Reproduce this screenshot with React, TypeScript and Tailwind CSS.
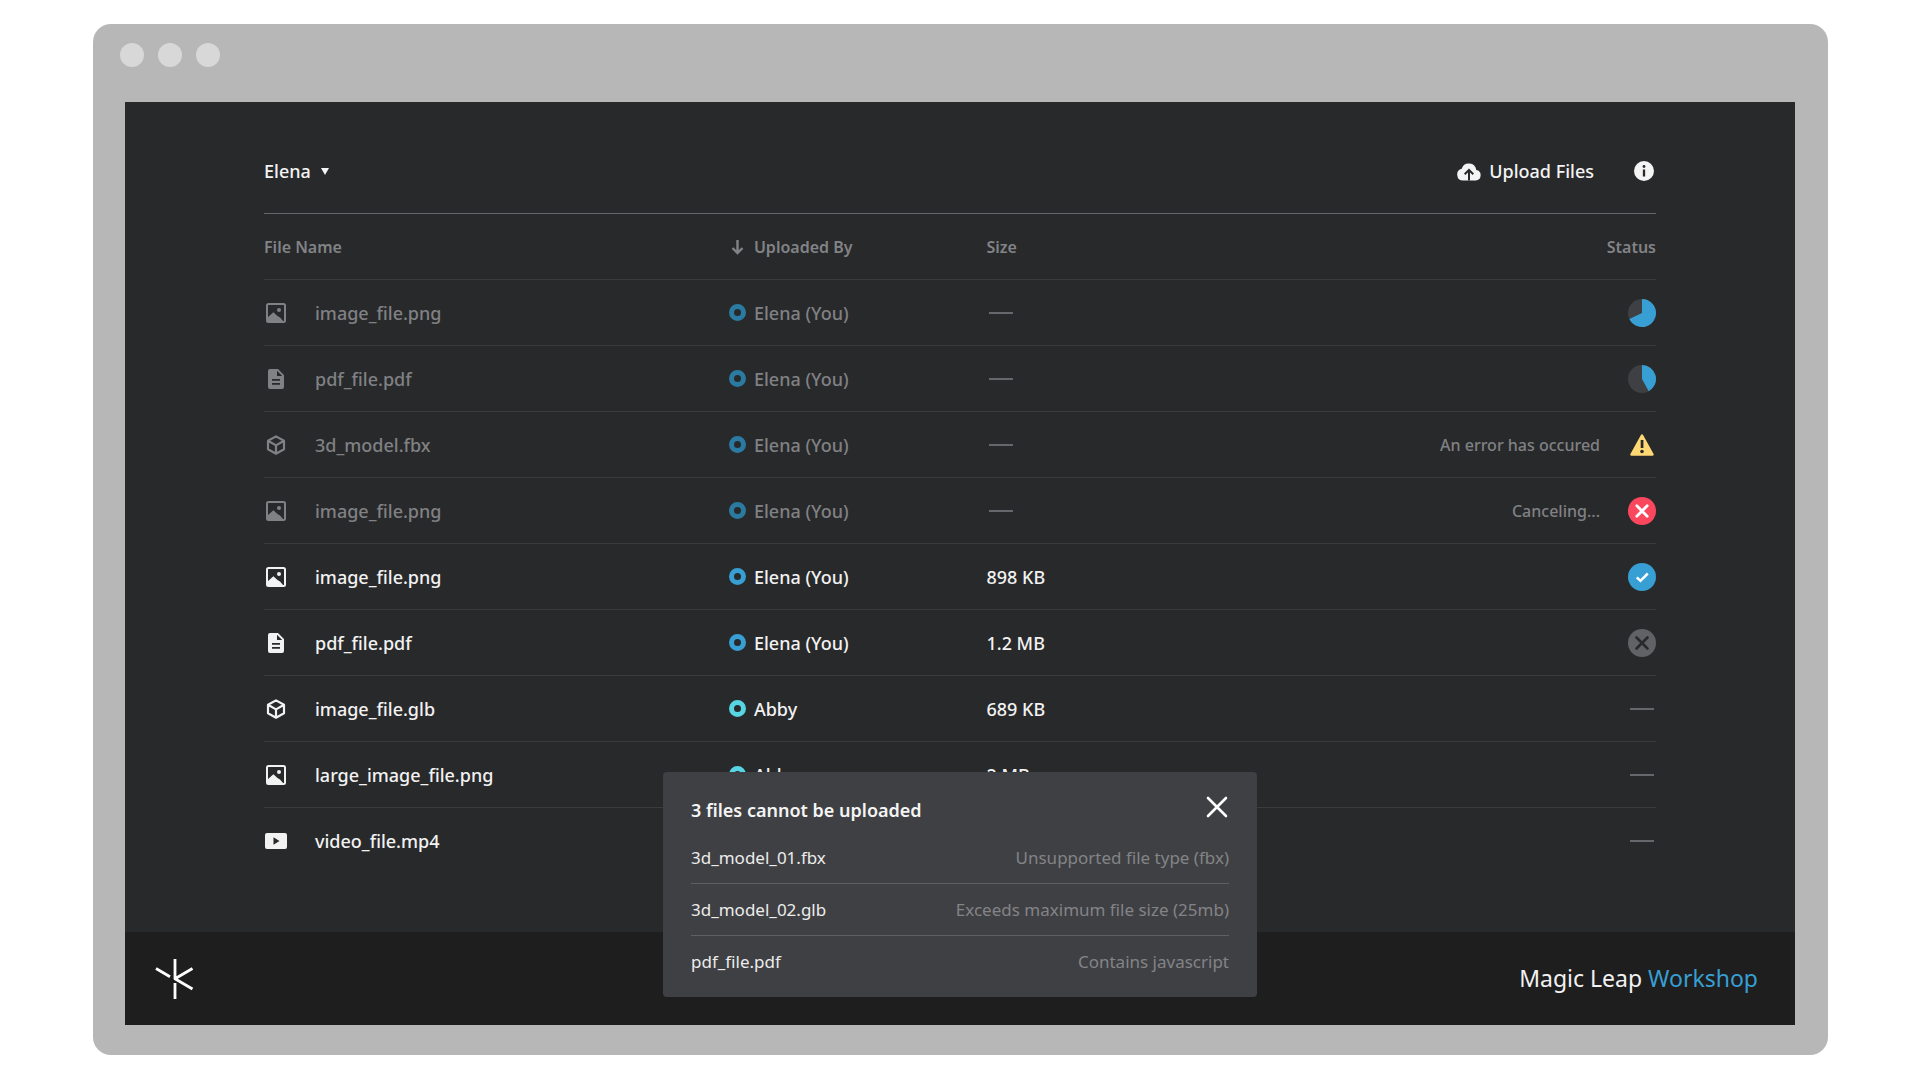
import React from "react";

type FileKind = "image" | "document" | "model" | "video";
type Status = "p68" | "p42" | "error" | "canceling" | "done" | "remove" | "none";

interface FileRow {
  id: number;
  kind: FileKind;
  name: string;
  owner?: string;
  size: string | null;
  status: Status;
  message?: string;
  pending?: boolean;
}

const files: FileRow[] = [
  { id: 1, kind: "image", name: "image_file.png", owner: "Elena (You)", size: null, status: "p68", pending: true },
  { id: 2, kind: "document", name: "pdf_file.pdf", owner: "Elena (You)", size: null, status: "p42", pending: true },
  { id: 3, kind: "model", name: "3d_model.fbx", owner: "Elena (You)", size: null, status: "error", message: "An error has occured", pending: true },
  { id: 4, kind: "image", name: "image_file.png", owner: "Elena (You)", size: null, status: "canceling", message: "Canceling...", pending: true },
  { id: 5, kind: "image", name: "image_file.png", owner: "Elena (You)", size: "898 KB", status: "done" },
  { id: 6, kind: "document", name: "pdf_file.pdf", owner: "Elena (You)", size: "1.2 MB", status: "remove" },
  { id: 7, kind: "model", name: "image_file.glb", owner: "Abby", size: "689 KB", status: "none" },
  { id: 8, kind: "image", name: "large_image_file.png", owner: "Abby", size: "2 MB", status: "none" },
  { id: 9, kind: "video", name: "video_file.mp4", size: null, status: "none" },
];

const rejected = [
  { name: "3d_model_01.fbx", reason: "Unsupported file type (fbx)" },
  { name: "3d_model_02.glb", reason: "Exceeds maximum file size (25mb)" },
  { name: "pdf_file.pdf", reason: "Contains javascript" },
];

function KindIcon({ kind }: { kind: FileKind }) {
  return (
    <svg className="size-6 shrink-0" viewBox="0 0 24 24" fill="none" aria-hidden="true">
      {kind === "image" && (
        <>
          <rect x="3" y="3" width="18" height="18" rx="1.5" stroke="currentColor" strokeWidth="2" />
          <path d="M3.500 16.500 9.400 11.200 13.500 15 16 16.600 19.500 20.500H3.500z" fill="currentColor" />
          <circle cx="15" cy="9" r="2" fill="currentColor" />
        </>
      )}
      {kind === "document" && (
        <path
          fillRule="evenodd"
          fill="currentColor"
          d="M6 2h8l6 6v12a2 2 0 0 1-2 2H6a2 2 0 0 1-2-2V4a2 2 0 0 1 2-2zm7 1.8V9h5.200zM8 12v1.700h8V12zm0 4v1.700h8V16z"
        />
      )}
      {kind === "model" && (
        <path
          d="M12 3.400 20 7.800v8.500L12 20.700 4 16.300V7.800zM4 7.800l8 4.600 8-4.600M12 12.400v8.300"
          stroke="currentColor"
          strokeWidth="2.200"
          strokeLinejoin="round"
        />
      )}
      {kind === "video" && (
        <path
          fillRule="evenodd"
          fill="currentColor"
          d="M3 4h18a2 2 0 0 1 2 2v12a2 2 0 0 1-2 2H3a2 2 0 0 1-2-2V6a2 2 0 0 1 2-2zm6.500 4.300v7.400l6-3.700z"
        />
      )}
    </svg>
  );
}

function Dash() {
  return <span className="block h-0.5 w-6 bg-[#66676d]" />;
}

function Pie({ percent }: { percent: number }) {
  const angle = (percent / 100) * 2 * Math.PI;
  const x = 14 + 14 * Math.sin(angle);
  const y = 14 - 14 * Math.cos(angle);
  return (
    <svg className="size-7" viewBox="0 0 28 28" role="img" aria-label={`${percent}% uploaded`}>
      <circle cx="14" cy="14" r="14" fill="#3f4044" />
      <path d={`M14 14V0A14 14 0 ${percent > 50 ? 1 : 0} 1 ${x} ${y}z`} fill="#379fd3" />
    </svg>
  );
}

function StatusMark({ status }: { status: Status }) {
  if (status === "p68") return <Pie percent={68} />;
  if (status === "p42") return <Pie percent={42} />;
  if (status === "error")
    return (
      <svg className="size-7" viewBox="0 0 28 28" role="img" aria-label="Error">
        <path d="M14 4.500 24.500 23.500H3.500z" fill="#ffd874" stroke="#ffd874" strokeWidth="2.500" strokeLinejoin="round" />
        <rect x="12.700" y="9" width="2.700" height="8" fill="#28292b" />
        <circle cx="14" cy="20.500" r="1.800" fill="#28292b" />
      </svg>
    );
  if (status === "canceling")
    return (
      <svg className="size-7" viewBox="0 0 28 28" role="img" aria-label="Canceling">
        <circle cx="14" cy="14" r="14" fill="#fb475e" />
        <path d="m8.800 8.800 10.400 10.400M19.200 8.800 8.800 19.200" stroke="#fff" strokeWidth="2.800" strokeLinecap="round" />
      </svg>
    );
  if (status === "done")
    return (
      <svg className="size-7" viewBox="0 0 28 28" role="img" aria-label="Uploaded">
        <circle cx="14" cy="14" r="14" fill="#379fd3" />
        <path d="m8.800 14.300 3.700 3.500 7.300-7.300" fill="none" stroke="#fff" strokeWidth="2.500" />
      </svg>
    );
  if (status === "remove")
    return (
      <button type="button" aria-label="Remove file" className="block">
        <svg className="size-7" viewBox="0 0 28 28" aria-hidden="true">
          <circle cx="14" cy="14" r="14" fill="#606266" />
          <path d="m8.500 8.500 11 11M19.500 8.500l-11 11" stroke="#28292b" strokeWidth="2.600" strokeLinecap="round" />
        </svg>
      </button>
    );
  return (
    <span className="block px-0.5">
      <Dash />
    </span>
  );
}

function OwnerRing({ owner, pending }: { owner: string; pending?: boolean }) {
  const color = owner === "Abby" ? "border-[#57d5e3]" : pending ? "border-[#2b7aa1]" : "border-[#379fd3]";
  return <span className={`block size-[17px] shrink-0 rounded-full border-5 ${color}`} />;
}

function TopBar() {
  return (
    <header className="flex items-center justify-between border-b border-[#66676a] pt-[55px] pr-0.5 pb-7 text-lg leading-7 font-medium text-[#f4f4f4]">
      <div className="flex items-center gap-2.5">
        <select
          aria-label="User"
          className="field-sizing-content appearance-none bg-transparent outline-none"
          defaultValue="Elena"
        >
          <option>Elena</option>
          <option>Abby</option>
        </select>
        <svg className="h-[7px] w-2" viewBox="0 0 8 7" aria-hidden="true">
          <path d="M0 0h8L4 7z" fill="currentColor" />
        </svg>
      </div>
      <div className="flex items-center gap-10">
        <button type="button" className="flex items-center gap-2">
          <svg className="size-6" viewBox="0 0 24 24" aria-hidden="true">
            <path
              d="M6 21.500a6 6 0 0 1-1.300-11.800A7.500 7.500 0 0 1 19.300 11 5.300 5.300 0 0 1 18.700 21.500z"
              fill="currentColor"
            />
            <path d="M12 21.500v-10M7.700 15.300 12 11l4.300 4.300" fill="none" stroke="#28292b" strokeWidth="2" />
          </svg>
          Upload Files
        </button>
        <button type="button" aria-label="Information">
          <svg className="size-5" viewBox="0 0 20 20" aria-hidden="true">
            <circle cx="10" cy="10" r="10" fill="currentColor" />
            <circle cx="10" cy="5.500" r="1.400" fill="#28292b" />
            <path d="M10 8.500v7" stroke="#28292b" strokeWidth="2.300" />
          </svg>
        </button>
      </div>
    </header>
  );
}

function FileTable() {
  return (
    <table className="w-full table-fixed border-separate border-spacing-0 text-left text-lg font-medium">
      <colgroup>
        <col className="w-[33.4%]" />
        <col className="w-[18.5%]" />
        <col className="w-[19%]" />
        <col />
      </colgroup>
      <thead>
        <tr className="h-[66px] text-base text-[#828386] *:border-b *:border-[#3a3b3d] *:p-0 *:font-semibold">
          <th scope="col">File Name</th>
          <th scope="col" aria-sort="descending">
            <button type="button" className="flex items-center gap-2">
              <svg className="h-4 w-[17px]" viewBox="0 0 17 16" fill="none" aria-hidden="true">
                <path d="M8.500 1v13M3.500 9l5 5 5-5" stroke="currentColor" strokeWidth="2.400" />
              </svg>
              Uploaded By
            </button>
          </th>
          <th scope="col">Size</th>
          <th scope="col" className="text-right">Status</th>
        </tr>
      </thead>
      <tbody>
        {files.map((file) => (
          <tr
            key={file.id}
            className={`h-[66px] *:border-[#3a3b3d] *:p-0 not-last:*:border-b ${file.pending ? "text-[#808184]" : "text-[#f2f2f2]"}`}
          >
            <td>
              <div className="flex items-center gap-[27px] whitespace-nowrap">
                <KindIcon kind={file.kind} />
                {file.name}
              </div>
            </td>
            <td>
              {file.owner && (
                <div className="flex items-center gap-2 whitespace-nowrap">
                  <OwnerRing owner={file.owner} pending={file.pending} />
                  {file.owner}
                </div>
              )}
            </td>
            <td>
              {file.size ?? (
                <span className="block pl-[3px]">
                  <Dash />
                </span>
              )}
            </td>
            <td>
              <div className="flex items-center justify-end gap-7 text-base">
                {file.message}
                <StatusMark status={file.status} />
              </div>
            </td>
          </tr>
        ))}
      </tbody>
    </table>
  );
}

function UploadErrors() {
  return (
    <section
      role="dialog"
      aria-labelledby="upload-errors-title"
      className="absolute bottom-7 left-1/2 w-[594px] -translate-x-1/2 rounded bg-[#3f4043] px-7 pt-4 pb-[9px]"
    >
      <div className="flex h-11 items-center justify-between">
        <h2 id="upload-errors-title" className="text-lg font-semibold text-[#f4f4f4]">
          3 files cannot be uploaded
        </h2>
        <button type="button" aria-label="Close" className="-mt-1.5">
          <svg className="size-6" viewBox="0 0 24 24" aria-hidden="true">
            <path d="m3 3 18 18M21 3 3 21" stroke="#fff" strokeWidth="2.600" strokeLinecap="round" />
          </svg>
        </button>
      </div>
      <ul>
        {rejected.map((item) => (
          <li
            key={item.name}
            className="flex h-[52px] items-center justify-between border-[#5f6064] text-[17px] not-last:border-b"
          >
            <span className="text-[#ececec]">{item.name}</span>
            <span className="text-[#838487]">{item.reason}</span>
          </li>
        ))}
      </ul>
    </section>
  );
}

export default function App() {
  return (
    <div className="min-h-screen bg-white py-6 pr-[92px] pl-[93px] font-['Noto_Sans',sans-serif]">
      <div className="rounded-[18px] bg-[#b7b7b7] pr-[33px] pb-[30px] pl-8">
        <div className="-ml-[5px] flex h-[78px] gap-3.5 pt-[19px]">
          <span className="size-6 rounded-full bg-[#d8d8d8]" />
          <span className="size-6 rounded-full bg-[#d8d8d8]" />
          <span className="size-6 rounded-full bg-[#d8d8d8]" />
        </div>
        <div className="relative bg-[#28292b]">
          <main className="px-[139px] pb-[58px]">
            <TopBar />
            <FileTable />
          </main>
          <footer className="flex h-[93px] items-center justify-between bg-[#1e1e1e] pr-[37px] pl-7">
            <svg className="size-[42px]" viewBox="0 0 42 42" fill="none" role="img" aria-label="Magic Leap">
              <path
                d="M3 10.500 17 18.700M22 1v20M22 25v16M39.500 10.500 22 20.700 39.500 31"
                stroke="#fff"
                strokeWidth="2.800"
                strokeLinejoin="round"
              />
            </svg>
            <p className="text-[23px] text-[#f2f2f2]">
              Magic Leap <span className="text-[#379fd3]">Workshop</span>
            </p>
          </footer>
          <UploadErrors />
        </div>
      </div>
    </div>
  );
}
